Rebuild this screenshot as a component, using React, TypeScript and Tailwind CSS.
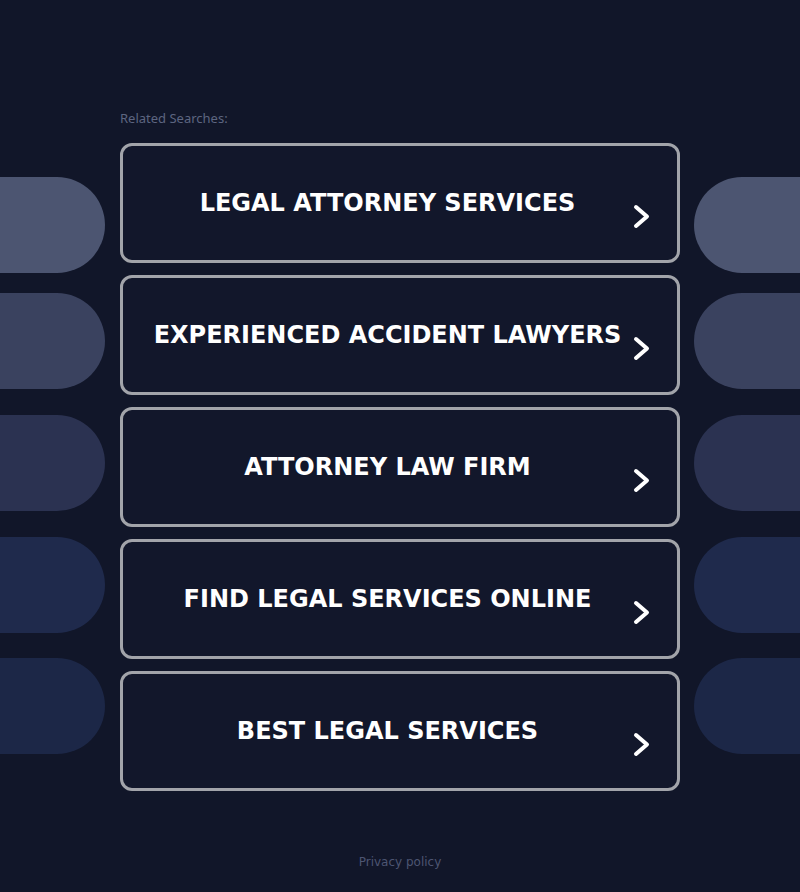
const SEARCHES = [
  'LEGAL ATTORNEY SERVICES',
  'EXPERIENCED ACCIDENT LAWYERS',
  'ATTORNEY LAW FIRM',
  'FIND LEGAL SERVICES ONLINE',
  'BEST LEGAL SERVICES',
];

const PILLS = [
  { color: 'bg-[#4c5571]', mt: 'mt-[177px]' },
  { color: 'bg-[#3a425f]', mt: 'mt-[20px]' },
  { color: 'bg-[#2b3251]', mt: 'mt-[26px]' },
  { color: 'bg-[#1f2a4c]', mt: 'mt-[26px]' },
  { color: 'bg-[#1c2747]', mt: 'mt-[25px]' },
];

function Chevron() {
  return (
    <svg width="22" height="28" viewBox="0 0 22 28" className="absolute right-[24px] top-[57px]">
      <path d="M5 4 L16 13.5 L5 23" fill="none" stroke="white" strokeWidth="4" strokeLinecap="round" strokeLinejoin="round" />
    </svg>
  );
}

function PillColumn({ side }: { side: 'left' | 'right' }) {
  return (
    <div className="flex flex-col">
      {PILLS.map((p, i) => (
        <div
          key={i}
          className={`${p.mt} h-[96px] ${p.color} ${side === 'left' ? 'rounded-r-[48px]' : 'rounded-l-[48px]'}`}
        />
      ))}
    </div>
  );
}

export default function App() {
  return (
    <div className="min-h-[892px] w-full bg-[#111629] flex flex-col" style={{ fontFamily: '"DejaVu Sans", sans-serif' }}>
      <div className="grid grid-cols-[105px_15px_560px_14px_106px]">
        <PillColumn side="left" />
        <div />
        <div className="flex flex-col">
          <div className="pt-[109px] h-[143px] text-[13px] text-[#5d6580]" style={{ fontFamily: '"Noto Sans", sans-serif' }}>
            Related Searches:
          </div>
          <div className="flex flex-col gap-[12px]">
            {SEARCHES.map((s) => (
              <a
                key={s}
                href="#"
                className="relative h-[120px] rounded-[12px] border-[3px] border-[#a2a4aa] bg-[#12172b] flex items-center justify-center"
              >
                <span className="mr-[25px] text-[24px] font-bold text-white">{s}</span>
                <Chevron />
              </a>
            ))}
          </div>
        </div>
        <div />
        <PillColumn side="right" />
      </div>
      <div className="mt-[62px] text-center text-[12px] text-[#4d5572]">Privacy policy</div>
    </div>
  );
}
